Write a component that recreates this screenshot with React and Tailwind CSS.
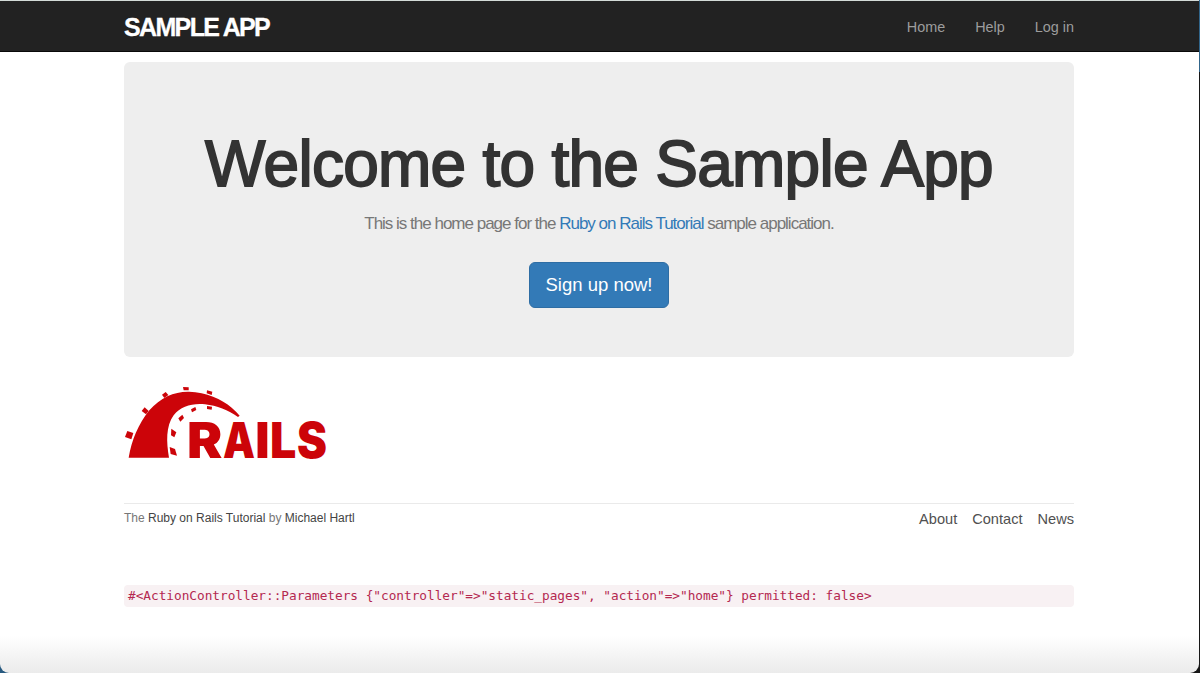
const sans = "font-['Liberation_Sans',Arial,sans-serif]";

function RailsLogo() {
  return (
    <svg className="block h-[75px] w-[204px] overflow-visible" viewBox="27 30 612 225" role="img" aria-label="Rails" fill="#cc0409">
      <path d="M41 248C50 196 70 147 103 106C137 67 178 49 222 50C274 51 320 72 350 98Q364 110 374 122L369 126C340 106 305 92 270 88C232 84 197 94 176 121C152 154 154 202 162 248Z" />
      <g>
        <path d="M37 168L55 174L49 193L30 186Z" />
        <path d="M89 97L101 108L93 118L80 108Z" />
        <path d="M152 51L160 60L148 69L141 59Z" />
        <path d="M204 36L221 37L221 46L206 46Z" />
        <path d="M276 46L292 50L290 60L275 55Z" />
        <path d="M276 93L291 95L290 104L276 102Z" />
        <path d="M241 96L244 105L231 112L228 103Z" />
        <path d="M202 119L207 129L196 140L190 130Z" />
        <path d="M169 161L184 172L178 187L168 181Z" />
        <path d="M164 216L180 222L186 242L167 237Z" />
      </g>
      <text y="248" fontFamily="Inter, Roboto, sans-serif" fontWeight="900" fontSize="147">
        <tspan x="216" textLength="106" lengthAdjust="spacingAndGlyphs">R</tspan>
        <tspan x="324" textLength="96" lengthAdjust="spacingAndGlyphs">A</tspan>
        <tspan x="421" textLength="43" lengthAdjust="spacingAndGlyphs">I</tspan>
        <tspan x="465" textLength="79" lengthAdjust="spacingAndGlyphs">L</tspan>
        <tspan x="546" textLength="90" lengthAdjust="spacingAndGlyphs">S</tspan>
      </text>
    </svg>
  );
}

export default function App() {
  return (
    <div className={`${sans} h-[673px] w-full overflow-hidden bg-linear-to-b from-[#31658a] from-50% to-[#285a80]`}>
      <div className="flex h-full w-full bg-linear-to-r from-transparent from-50% to-[#171717] to-50%">
        <div className="flex h-full min-w-0 grow flex-col overflow-hidden rounded-b-[9px] bg-linear-to-b from-white from-[94.5%] to-[#ebebeb]">
          <header className="h-[52px] shrink-0 border-t border-b border-t-[#d4dbd8] border-b-[#090909] bg-[#222]">
            <div className="mr-[125px] ml-[124px] flex h-[50px] items-center justify-between pt-[2px]">
              <a href="#" className="text-[25px] leading-[50px] font-bold tracking-[-1.65px] whitespace-nowrap text-white [-webkit-text-stroke:0.3px_#fff]">SAMPLE APP</a>
              <nav className="flex gap-[30px] text-[14.4px] leading-[50px] text-[#9d9d9d]">
                <a href="#">Home</a>
                <a href="#">Help</a>
                <a href="#">Log in</a>
              </nav>
            </div>
          </header>
          <main className="mr-[125px] ml-[124px] flex flex-col">
            <section className="mt-[10px] flex h-[295px] flex-col items-center rounded-md bg-[#eee] text-center">
              <h1 className="mt-[67px] h-[70px] text-[64px] leading-[70px] tracking-[-0.74px] whitespace-nowrap text-[#333] [-webkit-text-stroke:1.8px_#333]">
                Welcome to the Sample App
              </h1>
              <p className="mt-[12px] h-[25px] text-[17px] leading-[25px] tracking-[-1px] whitespace-nowrap text-[#777]">
                This is the home page for the <a href="#" className="text-[#337ab7]">Ruby on Rails Tutorial</a> sample application.
              </p>
              <a href="#" className="mt-[26px] flex h-[46px] w-[140px] items-center justify-center rounded-md border border-[#2e6da4] bg-[#337ab7] pt-px text-[18.5px] leading-none whitespace-nowrap text-white">
                Sign up now!
              </a>
            </section>
            <div className="mt-[28px]">
              <RailsLogo />
            </div>
            <footer className="mt-[43px] flex h-[82px] items-start justify-between border-t border-[#eaeaea] text-[#777]">
              <small className="mt-[5px] text-[12px] leading-[18px] whitespace-nowrap">
                The <a href="#" className="text-[#444]">Ruby on Rails Tutorial</a> by <a href="#" className="text-[#444]">Michael Hartl</a>
              </small>
              <nav className="mt-[5px] flex gap-[15px] text-[14.6px] leading-[21px] text-[#505050]">
                <a href="#">About</a>
                <a href="#">Contact</a>
                <a href="#">News</a>
              </nav>
            </footer>
            <pre className="h-[22px] rounded bg-[#f8f1f3] px-1 font-['DejaVu_Sans_Mono',monospace] text-[12.75px] leading-[21px] tracking-[-0.01px] text-[#b42850]">
              {'#<ActionController::Parameters {"controller"=>"static_pages", "action"=>"home"} permitted: false>'}
            </pre>
          </main>
        </div>
        <div className="flex w-px shrink-0 flex-col">
          <div className="h-[72px] bg-[#31658a]" />
          <div className="grow bg-[#171717]" />
        </div>
      </div>
    </div>
  );
}
